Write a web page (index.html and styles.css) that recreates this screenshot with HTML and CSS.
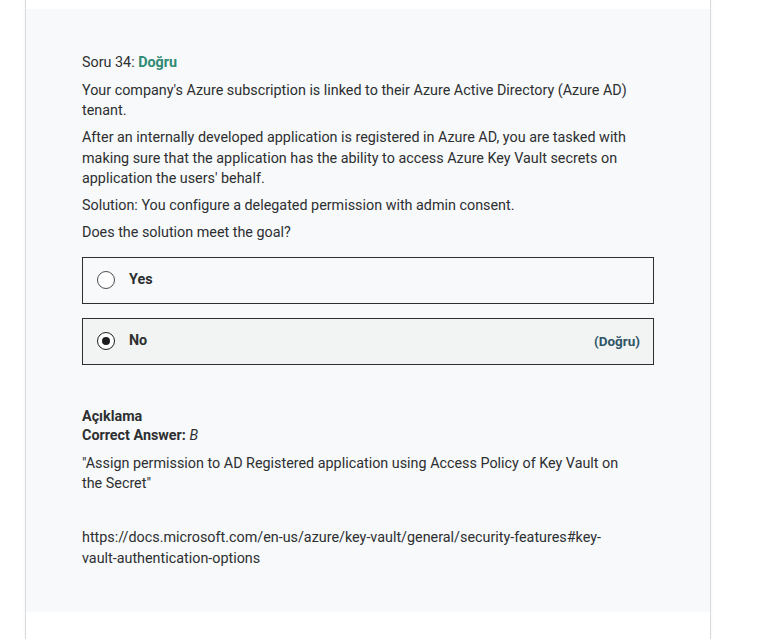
FILE: index.html
```html
<!DOCTYPE html>
<html lang="tr">
<head>
<meta charset="utf-8">
<link rel="stylesheet" href="styles.css">
</head>
<body>
<div class="card">
  <div class="top"></div>
  <section class="panel">
    <div class="qhead">Soru 34: <span class="ok">Doğru</span></div>
    <div class="prompt">
      <p>Your company's Azure subscription is linked to their Azure Active Directory (Azure AD) tenant.</p>
      <p>After an internally developed application is registered in Azure AD, you are tasked with making sure that the application has the ability to access Azure Key Vault secrets on application the users' behalf.</p>
      <p>Solution: You configure a delegated permission with admin consent.</p>
      <p>Does the solution meet the goal?</p>
    </div>
    <div class="options">
      <div class="opt">
        <span class="radio"></span>
        <span class="label">Yes</span>
      </div>
      <div class="opt chosen">
        <span class="radio on"></span>
        <span class="label">No</span>
        <span class="tag">(Doğru)</span>
      </div>
    </div>
    <div class="expl">
      <div class="etitle">Açıklama</div>
      <div class="ans"><b>Correct Answer:</b> <i>B</i></div>
      <p>"Assign permission to AD Registered application using Access Policy of Key Vault on the Secret"</p>
      <p class="link">https://docs.microsoft.com/en-us/azure/key-vault/general/security-features#key-vault-authentication-options</p>
    </div>
  </section>
  <div class="bottom"></div>
</div>
</body>
</html>
```
FILE: styles.css
```css
html, body {
  margin: 0;
  padding: 0;
  background: #ffffff;
}
body {
  font-family: Roboto, "Liberation Sans", sans-serif;
  color: #2d2f31;
  font-size: 14.35px;
  line-height: 20px;
}
.card {
  margin-left: 25px;
  width: 684px;
  border-left: 1px solid #d8dcdf;
  border-right: 1px solid #d8dcdf;
  box-shadow: 0 0 3px rgba(0,0,0,0.06);
  height: 639px;
  overflow: hidden;
}
.top {
  height: 9px;
  background: #ffffff;
}
.panel {
  background: #f7f9fa;
  padding: 44px 57px 43px 56px;
}
.qhead {
  margin-bottom: 8px;
}
.ok {
  color: #2f8a73;
  font-weight: 700;
}
.prompt p {
  margin: 0 0 7px 0;
}
.prompt p:nth-child(2) {
  line-height: 20.5px;
  margin-bottom: 6px;
}
.prompt, .expl p {
  max-width: 550px;
}
.options {
  width: 572px;
  display: flex;
  flex-direction: column;
  gap: 14px;
  margin-top: 14px;
}
.opt {
  height: 45px;
  border: 1px solid #2d2f31;
  display: flex;
  align-items: center;
  padding: 0 13px 0 14px;
}
.opt.chosen {
  background: #f1f4f3;
}
.radio {
  width: 18px;
  height: 18px;
  border: 1px solid #4a4d50;
  border-radius: 50%;
  box-sizing: border-box;
  display: flex;
  align-items: center;
  justify-content: center;
  margin-right: 14px;
  background: #fff;
}
.radio.on {
  border-color: #1c1d1f;
  border-width: 1.5px;
}
.radio.on::after {
  content: "";
  width: 8px;
  height: 8px;
  border-radius: 50%;
  background: #1c1d1f;
}
.label {
  font-weight: 700;
  flex: 1;
}
.tag {
  font-weight: 700;
  color: #2f5566;
  font-size: 13.5px;
}
.expl {
  margin-top: 42px;
}
.etitle, .ans b {
  font-weight: 700;
}
.ans {
  line-height: 19px;
}
.etitle {
  line-height: 19px;
}
.ans i {
  font-style: italic;
}
.expl p {
  margin: 9px 0 0 0;
}
.expl p.link {
  margin-top: 33px;
  line-height: 21px;
}
.bottom {
  background: #ffffff;
}
```
